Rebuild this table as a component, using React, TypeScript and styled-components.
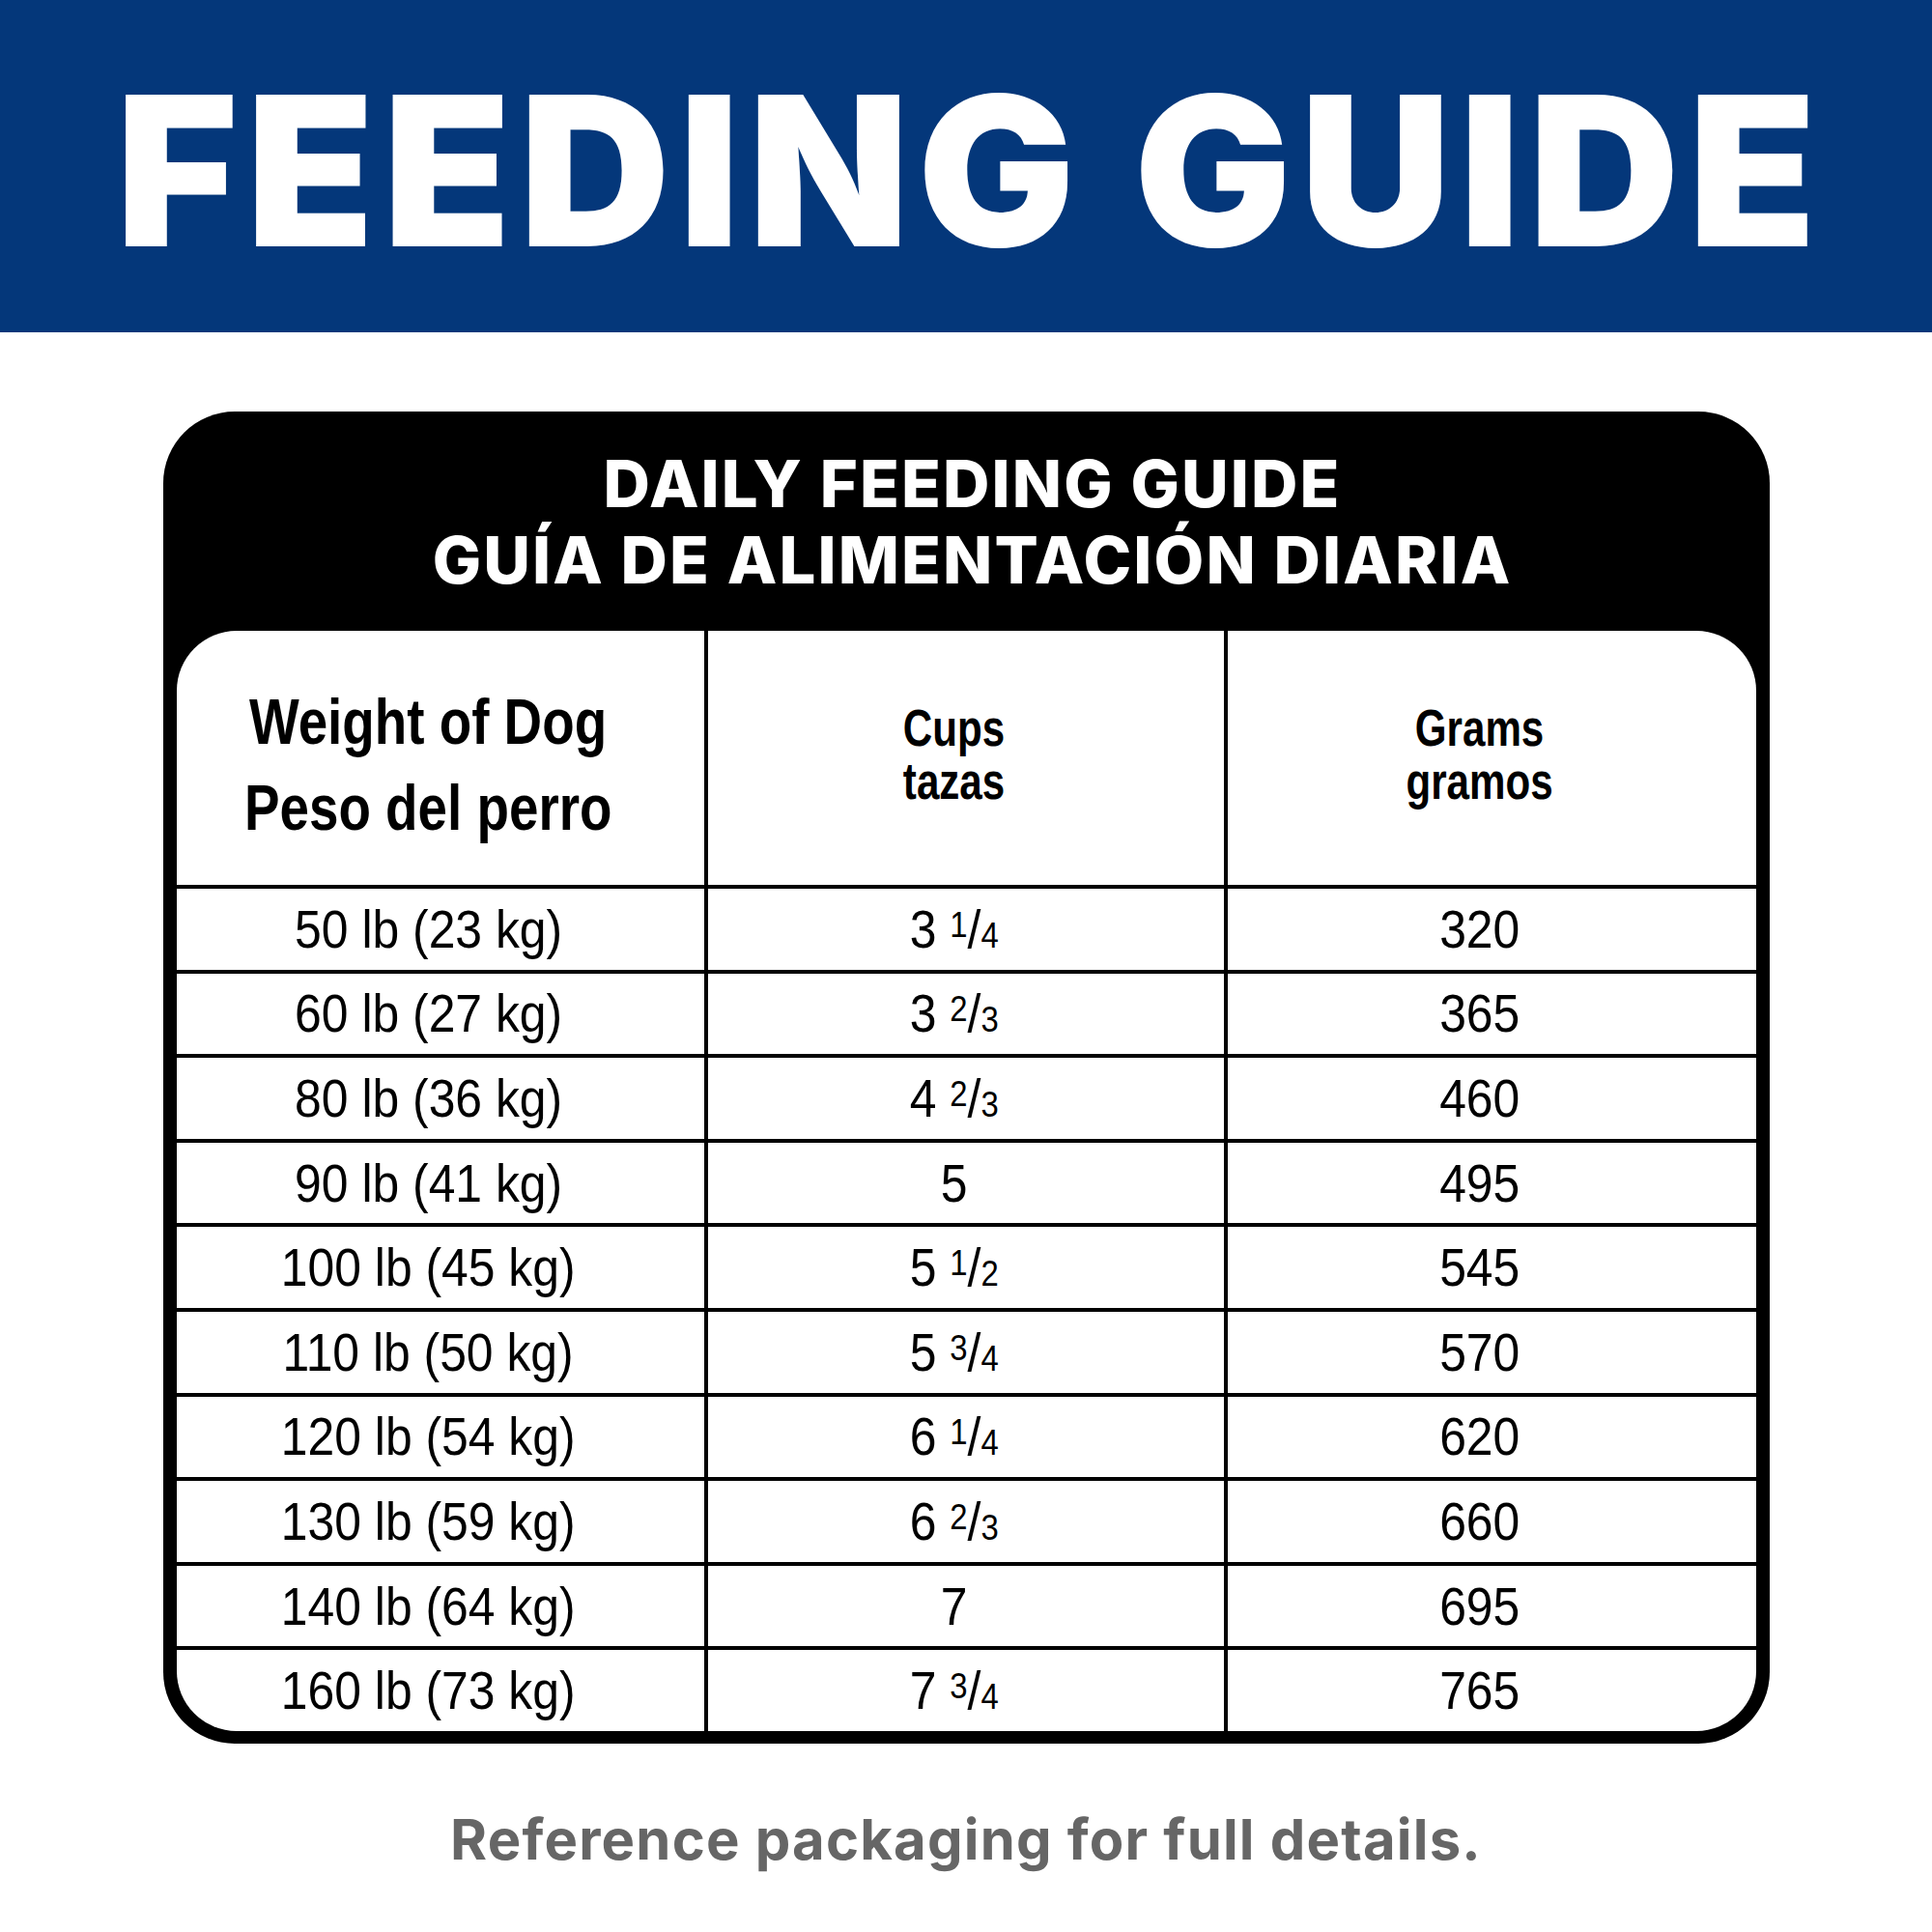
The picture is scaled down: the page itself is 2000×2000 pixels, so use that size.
import React from 'react';
import styled, { createGlobalStyle } from 'styled-components';

const GlobalStyle = createGlobalStyle`
  html, body {
    margin: 0;
    padding: 0;
    background: #fff;
  }
  body {
    width: 2000px;
    height: 2000px;
    overflow: hidden;
  }
`;

const Page = styled.div`
  width: 2000px;
  height: 2000px;
  display: flex;
  flex-direction: column;
  align-items: center;
  background: #fff;
`;

const Banner = styled.header`
  align-self: stretch;
  height: 344px;
  box-sizing: border-box;
  padding-top: 69px;
  display: flex;
  justify-content: center;
  background: #04377a;
`;

const BannerTitle = styled.h1`
  margin: 0;
  padding-left: 9px;
  color: #fff;
  font-family: Inter, 'Liberation Sans', sans-serif;
  font-weight: 900;
  font-size: 216px;
  line-height: 1;
  letter-spacing: 9px;
  white-space: nowrap;
`;

const Card = styled.section`
  width: 1663px;
  margin-top: 82px;
  box-sizing: border-box;
  padding: 0 14px 13px;
  background: #000;
  border-radius: 74px;
`;

const CardHeader = styled.div`
  height: 227px;
  box-sizing: border-box;
  padding-left: 13px;
  display: flex;
  flex-direction: column;
  align-items: center;
  justify-content: center;
  color: #fff;
  font-family: Inter, 'Liberation Sans', sans-serif;
  font-weight: 800;
  font-size: 67px;
  line-height: 79px;
  letter-spacing: 2.1px;
  white-space: nowrap;
`;

const Table = styled.div`
  height: 1139px;
  display: grid;
  grid-template-columns: 546px 538px 1fr;
  grid-template-rows: 263px repeat(10, 1fr);
  background: #fff;
  border-radius: 62px;
  overflow: hidden;
`;

const Cell = styled.div<{ $col: number; $head?: boolean; $shift?: number }>`
  box-sizing: border-box;
  display: flex;
  flex-direction: column;
  align-items: center;
  justify-content: center;
  padding-right: 24px;
  padding-top: ${(p) => Math.max(0, (p.$shift ?? 0) * 2)}px;
  padding-bottom: ${(p) => Math.max(0, -(p.$shift ?? 0) * 2)}px;
  color: #000;
  font-family: 'Liberation Sans', Arial, sans-serif;
  border-left: ${(p) => (p.$col > 0 ? '4px solid #000' : 'none')};
  border-top: ${(p) => (p.$head ? 'none' : '4px solid #000')};
  white-space: nowrap;
`;

const Squeeze = styled.span<{ $x: number; $size: number; $lh: number; $bold?: boolean }>`
  display: inline-block;
  font-size: ${(p) => p.$size}px;
  line-height: ${(p) => p.$lh}px;
  font-weight: ${(p) => (p.$bold ? 700 : 400)};
  transform: scaleX(${(p) => p.$x});
  transform-origin: center;
`;

const Num = styled.span`
  font-size: 0.66em;
  line-height: 0;
  vertical-align: 0.3em;
`;

const Den = styled.span`
  font-size: 0.66em;
  line-height: 0;
`;

const Footer = styled.p`
  margin: 70px 0 0;
  color: #666;
  font-family: Inter, 'Liberation Sans', sans-serif;
  font-weight: 700;
  font-size: 58px;
  line-height: 1;
  letter-spacing: 1.2px;
`;

type Row = { weight: string; whole: string; frac?: [string, string]; grams: string };

const rows: Row[] = [
  { weight: '50 lb (23 kg)', whole: '3', frac: ['1', '4'], grams: '320' },
  { weight: '60 lb (27 kg)', whole: '3', frac: ['2', '3'], grams: '365' },
  { weight: '80 lb (36 kg)', whole: '4', frac: ['2', '3'], grams: '460' },
  { weight: '90 lb (41 kg)', whole: '5', grams: '495' },
  { weight: '100 lb (45 kg)', whole: '5', frac: ['1', '2'], grams: '545' },
  { weight: '110 lb (50 kg)', whole: '5', frac: ['3', '4'], grams: '570' },
  { weight: '120 lb (54 kg)', whole: '6', frac: ['1', '4'], grams: '620' },
  { weight: '130 lb (59 kg)', whole: '6', frac: ['2', '3'], grams: '660' },
  { weight: '140 lb (64 kg)', whole: '7', grams: '695' },
  { weight: '160 lb (73 kg)', whole: '7', frac: ['3', '4'], grams: '765' },
];

function Value({ children }: { children: React.ReactNode }) {
  return (
    <Squeeze $x={0.89} $size={56} $lh={64}>
      {children}
    </Squeeze>
  );
}

function SmallHead({ children }: { children: React.ReactNode }) {
  return (
    <Squeeze $x={0.78} $size={54} $lh={55} $bold>
      {children}
    </Squeeze>
  );
}

export default function App() {
  return (
    <Page>
      <GlobalStyle />
      <Banner>
        <BannerTitle>FEEDING GUIDE</BannerTitle>
      </Banner>

      <Card>
        <CardHeader>
          <span>DAILY FEEDING GUIDE</span>
          <span>GUÍA DE ALIMENTACIÓN DIARIA</span>
        </CardHeader>

        <Table>
          <Cell $col={0} $head $shift={7}>
            <Squeeze $x={0.83} $size={66} $lh={89} $bold>
              Weight of Dog
            </Squeeze>
            <Squeeze $x={0.83} $size={66} $lh={89} $bold>
              Peso del perro
            </Squeeze>
          </Cell>
          <Cell $col={1} $head $shift={-4}>
            <SmallHead>Cups</SmallHead>
            <SmallHead>tazas</SmallHead>
          </Cell>
          <Cell $col={2} $head $shift={-4}>
            <SmallHead>Grams</SmallHead>
            <SmallHead>gramos</SmallHead>
          </Cell>

          {rows.map((r) => (
            <React.Fragment key={r.weight}>
              <Cell $col={0}>
                <Value>{r.weight}</Value>
              </Cell>
              <Cell $col={1}>
                <Value>
                  {r.whole}
                  {r.frac && (
                    <>
                      {' '}
                      <Num>{r.frac[0]}</Num>/<Den>{r.frac[1]}</Den>
                    </>
                  )}
                </Value>
              </Cell>
              <Cell $col={2}>
                <Value>{r.grams}</Value>
              </Cell>
            </React.Fragment>
          ))}
        </Table>
      </Card>

      <Footer>Reference packaging for full details.</Footer>
    </Page>
  );
}
